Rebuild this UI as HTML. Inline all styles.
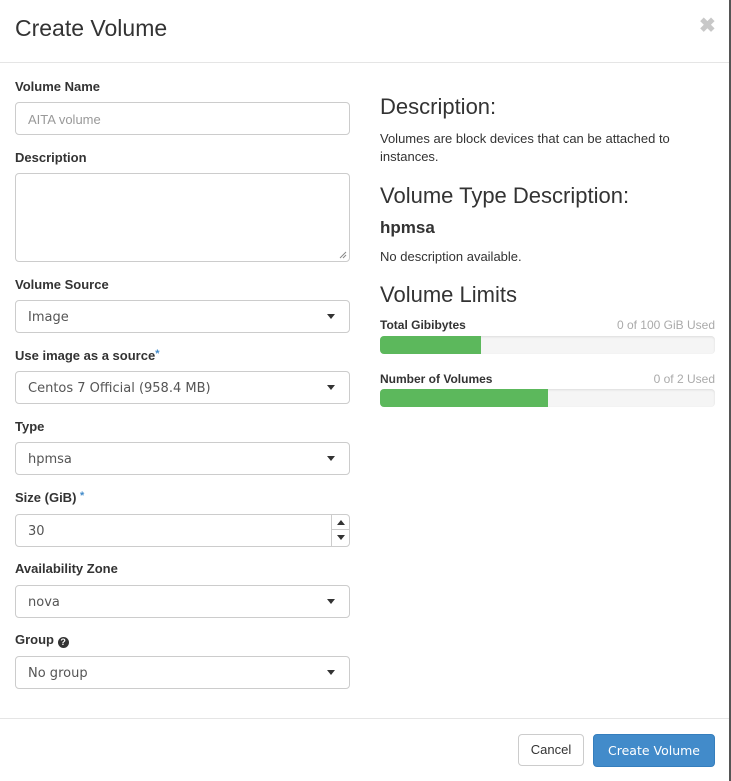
<!DOCTYPE html>
<html><head><style>
*{box-sizing:border-box;margin:0;padding:0}
body{width:731px;height:781px;background:#fff;font-family:"Liberation Sans",sans-serif;color:#333;position:relative;overflow:hidden}
.edge{position:absolute;right:0;top:0;width:2px;height:781px;background:#555}
.a{position:absolute}
h1{position:absolute;left:15px;top:15px;font-size:23px;font-weight:400;color:#333}
.x{position:absolute;left:699px;top:13px;font-size:20px;font-weight:bold;color:#c8c8c8}
.hr{position:absolute;left:0;width:729px;height:1px;background:#e5e5e5}
.lbl{position:absolute;left:15px;font-size:13px;font-weight:bold;color:#333}
.lbl b{color:#428bca;font-size:11px;vertical-align:top}
.in{position:absolute;left:15px;width:335px;height:33px;border:1px solid #ccc;border-radius:4px;font-family:"DejaVu Sans",sans-serif;font-size:13px;padding:9px 12px 7px;color:#555}
.car{position:absolute;right:14px;top:13px;width:0;height:0;border-left:4px solid transparent;border-right:4px solid transparent;border-top:5px solid #333}
.h3{position:absolute;left:380px;font-size:22px;color:#333}
.t{position:absolute;left:380px;font-size:13px;color:#333;line-height:18px}
.bar{position:absolute;left:380px;width:335px;height:18px;background:#f5f5f5;border-radius:4px;overflow:hidden;box-shadow:inset 0 1px 2px rgba(0,0,0,.1)}
.bar div{height:100%;background:#5cb85c}
.bl{position:absolute;left:380px;font-size:12px;font-weight:bold}
.br{position:absolute;right:16px;font-size:12px;color:#aaa}
</style></head><body>
<div class="edge"></div>
<h1>Create Volume</h1>
<div class="x">✖</div>
<div class="hr" style="top:62px"></div>

<div class="lbl" style="top:79px">Volume Name</div>
<div class="in" style="top:102px;color:#999;font-family:'Liberation Sans',sans-serif">AITA volume</div>
<div class="lbl" style="top:150px">Description</div>
<div class="in" style="top:173px;height:89px"><svg style="position:absolute;right:2px;bottom:2px" width="8" height="8"><path d="M1 7L7 1M4 7L7 4" stroke="#888" stroke-width="1"/></svg></div>
<div class="lbl" style="top:277px">Volume Source</div>
<div class="in" style="top:300px">Image<div class="car"></div></div>
<div class="lbl" style="top:348px">Use image as a source<b>*</b></div>
<div class="in" style="top:371px">Centos 7 Official (958.4 MB)<div class="car"></div></div>
<div class="lbl" style="top:419px">Type</div>
<div class="in" style="top:442px">hpmsa<div class="car"></div></div>
<div class="lbl" style="top:490px">Size (GiB) <b>*</b></div>
<div class="in" style="top:514px">30
<div style="position:absolute;right:0;top:0;width:18px;height:31px;border-left:1px solid #ccc">
<div style="height:15px;border-bottom:1px solid #ccc;position:relative"><div style="position:absolute;left:5px;top:5px;border-left:4px solid transparent;border-right:4px solid transparent;border-bottom:5px solid #333"></div></div>
<div style="position:relative"><div style="position:absolute;left:5px;top:5px;border-left:4px solid transparent;border-right:4px solid transparent;border-top:5px solid #333"></div></div>
</div></div>
<div class="lbl" style="top:561px">Availability Zone</div>
<div class="in" style="top:585px">nova<div class="car"></div></div>
<div class="lbl" style="top:632px">Group <span style="display:inline-block;width:11px;height:11px;border-radius:50%;background:#333;color:#fff;font-size:9px;text-align:center;line-height:11px;vertical-align:-1px">?</span></div>
<div class="in" style="top:656px">No group<div class="car"></div></div>

<div class="h3" style="top:94px">Description:</div>
<div class="t" style="top:130px">Volumes are block devices that can be attached to<br>instances.</div>
<div class="h3" style="top:183px">Volume Type Description:</div>
<div class="a" style="left:380px;top:218px;font-size:17px;font-weight:bold">hpmsa</div>
<div class="t" style="top:248px">No description available.</div>
<div class="h3" style="top:282px">Volume Limits</div>
<div class="bl" style="top:318px">Total Gibibytes</div><div class="br" style="top:318px">0 of 100 GiB Used</div>
<div class="bar" style="top:336px"><div style="width:101px"></div></div>
<div class="bl" style="top:372px">Number of Volumes</div><div class="br" style="top:372px">0 of 2 Used</div>
<div class="bar" style="top:389px"><div style="width:168px"></div></div>

<div class="hr" style="top:718px"></div>
<div class="a" style="left:518px;top:734px;width:66px;height:32px;border:1px solid #ccc;border-radius:4px;font-size:13px;text-align:center;line-height:29px">Cancel</div>
<div class="a" style="left:593px;top:734px;width:122px;height:33px;background:#428bca;border:1px solid #357ebd;border-radius:4px;font-family:'DejaVu Sans',sans-serif;font-size:12.5px;color:#fff;text-align:center;line-height:31px">Create Volume</div>
</body></html>
